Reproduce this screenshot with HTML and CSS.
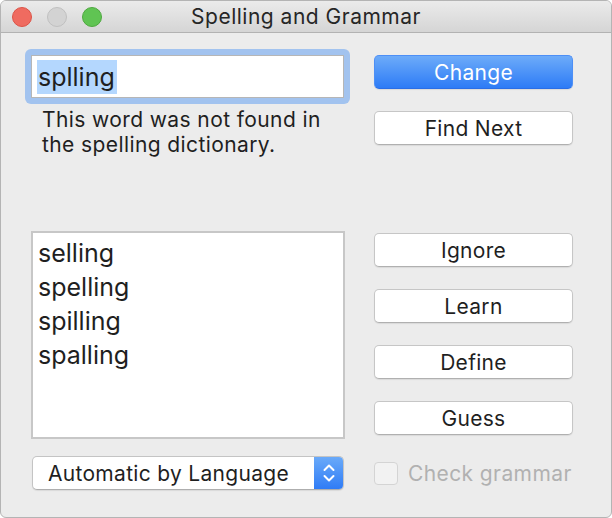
FILE: index.html
```html
<!DOCTYPE html>
<html lang="en">
<head>
    <meta charset="utf-8"/>
    <title>Spelling and Grammar</title>
    <link rel="stylesheet" href="styles.css">
</head>
<body>
<div class="window">
    <div class="titlebar">
        <div class="lights">
            <span class="light close"></span>
            <span class="light mini"></span>
            <span class="light zoom"></span>
        </div>
        <div class="title">Spelling and Grammar</div>
        <div></div>
    </div>

    <div class="content">
        <div class="left-col">
            <div class="focus-ring">
                <div class="field"><span class="sel">splling</span></div>
            </div>
            <p class="message">This word was not found in<br>the spelling dictionary.</p>

            <ul class="guesses">
                <li>selling</li>
                <li>spelling</li>
                <li>spilling</li>
                <li>spalling</li>
            </ul>

            <div class="popup">
                <span class="popup-label">Automatic by Language</span>
                <span class="popup-arrows">
                    <svg width="14" height="22" viewBox="0 0 14 22">
                        <polyline points="2.5,8 7,3.5 11.5,8" fill="none" stroke="#fff" stroke-width="2" stroke-linecap="round" stroke-linejoin="round"/>
                        <polyline points="2.5,14 7,18.5 11.5,14" fill="none" stroke="#fff" stroke-width="2" stroke-linecap="round" stroke-linejoin="round"/>
                    </svg>
                </span>
            </div>
        </div>

        <div class="right-col">
            <button class="btn btn-default">Change</button>
            <button class="btn">Find Next</button>
            <button class="btn gap-big">Ignore</button>
            <button class="btn">Learn</button>
            <button class="btn">Define</button>
            <button class="btn">Guess</button>
            <label class="check">
                <span class="check-box"></span>
                <span class="check-label">Check grammar</span>
            </label>
        </div>
    </div>
</div>
</body>
</html>
```

FILE: styles.css
```css
html {
    font-family: Inter, "Liberation Sans", sans-serif;
}
body {
    margin: 0;
    background: #fff;
}
.window {
    width: 612px;
    height: 518px;
    box-sizing: border-box;
    border: 1px solid #b4b4b4;
    border-radius: 6px;
    overflow: hidden;
    background: #ececec;
    color: #1f1f1f;
}
.titlebar {
    height: 31px;
    border-bottom: 1px solid #b2b2b2;
    background: linear-gradient(#ebebeb, #d5d5d5);
    display: grid;
    grid-template-columns: 1fr auto 1fr;
    align-items: center;
}
.lights {
    display: flex;
    gap: 15px;
    padding-left: 11px;
}
.light {
    width: 20px;
    height: 20px;
    border-radius: 50%;
    box-sizing: border-box;
}
.close {
    background: #ef6b60;
    border: 1px solid #dc5347;
}
.mini {
    background: #d3d3d3;
    border: 1px solid #c0c0c0;
}
.zoom {
    background: #60c453;
    border: 1px solid #4ea83f;
}
.title {
    font-size: 21px;
    letter-spacing: 0.5px;
    color: #262626;
}
.content {
    display: flex;
    gap: 24px;
    padding-left: 24px;
}
.left-col {
    width: 325px;
}
.focus-ring {
    margin-top: 16px;
    padding: 6px;
    border-radius: 6px;
    background: #a2c3ef;
}
.field {
    height: 43px;
    box-sizing: border-box;
    border: 1px solid #b6b6b6;
    background: #fff;
    padding: 0 5px;
    display: flex;
    align-items: center;
}
.sel {
    background: #b4d7fe;
    font-size: 25px;
    line-height: 34px;
    padding: 0 2px 0 1px;
}
.message {
    margin: 3px 0 0 0;
    padding-left: 17px;
    font-size: 21px;
    line-height: 25px;
    letter-spacing: 0.4px;
}
.guesses {
    list-style: none;
    margin: 74px 0 0 6px;
    padding: 3px 0 0 5px;
    width: 314px;
    height: 208px;
    box-sizing: border-box;
    border: 2px solid #c7c7c7;
    background: #fff;
}
.guesses li {
    font-size: 25px;
    line-height: 34px;
}
.popup {
    margin: 17px 0 0 7px;
    width: 312px;
    height: 34px;
    box-sizing: border-box;
    border: 1px solid #c4c4c4;
    border-bottom-color: #aeaeae;
    border-radius: 5px;
    background: #fff;
    box-shadow: 0 1px 1px rgba(0, 0, 0, 0.08);
    display: flex;
    align-items: center;
    overflow: hidden;
}
.popup-label {
    flex: 1;
    padding-left: 15px;
    font-size: 21px;
    letter-spacing: 0.3px;
}
.popup-arrows {
    width: 29px;
    align-self: stretch;
    background: linear-gradient(#6aaaf9, #2f7cf6);
    display: flex;
    align-items: center;
    justify-content: center;
}
.right-col {
    width: 199px;
    display: flex;
    flex-direction: column;
}
.btn {
    height: 34px;
    margin-top: 22px;
    box-sizing: border-box;
    border: 1px solid #c6c6c6;
    border-bottom-color: #b0b0b0;
    border-radius: 5px;
    background: #fff;
    box-shadow: 0 1px 1px rgba(0, 0, 0, 0.08);
    font-family: inherit;
    font-size: 21px;
    letter-spacing: 0.3px;
    color: #1f1f1f;
    padding: 1px 0 0 0;
}
.btn-default {
    border-color: #4d8ff6;
    border-bottom-color: #2a6ee6;
    background: linear-gradient(#6dabf9, #2d7bf6);
    color: #fff;
}
.gap-big {
    margin-top: 88px;
}
.check {
    margin-top: 26px;
    display: flex;
    align-items: center;
    gap: 10px;
}
.check-box {
    width: 24px;
    height: 23px;
    box-sizing: border-box;
    border: 1px solid #d4d4d4;
    border-radius: 4px;
    background: #f2f2f2;
}
.check-label {
    font-size: 21px;
    letter-spacing: 0.4px;
    color: #b1b1b1;
}
```
